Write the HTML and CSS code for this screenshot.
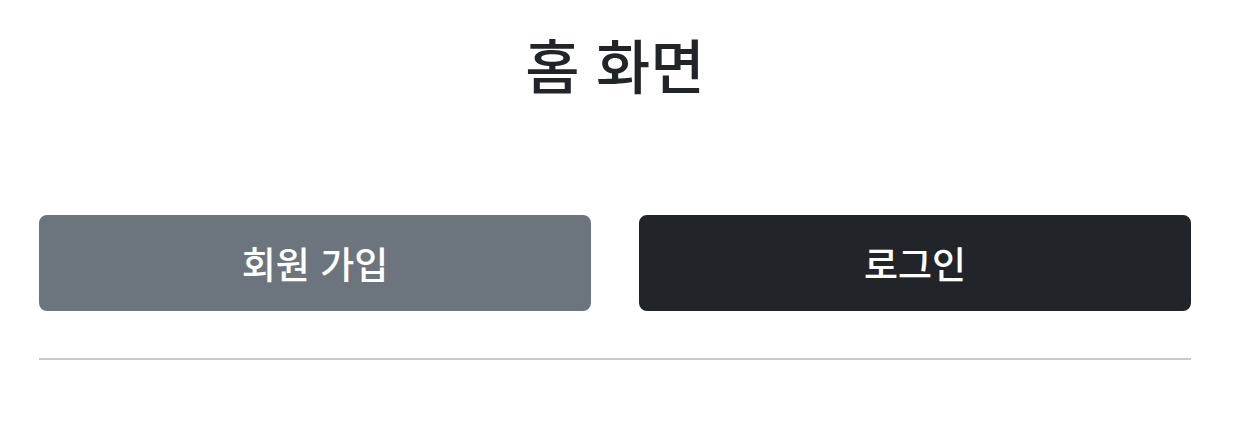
FILE: index.html
```html
<!DOCTYPE html>
<html lang="ko">
<head>
  <meta charset="UTF-8">
  <meta name="viewport" content="width=device-width, initial-scale=1.0">
  <title>홈 화면</title>
  <link rel="stylesheet" href="styles.css">
</head>
<body>
  <div class="container">
    <h1 class="title">홈 화면</h1>
    <div class="actions">
      <button class="btn btn-secondary">회원 가입</button>
      <button class="btn btn-dark">로그인</button>
    </div>
    <hr class="divider">
  </div>
</body>
</html>
```

FILE: styles.css
```css
body {
  margin: 0;
  font-family: "Noto Sans CJK KR", "Noto Sans", sans-serif;
  color: #212529;
  background: #fff;
}
.container {
  padding: 26px 43px 0 39px;
}
.title {
  margin: 0 0 114px;
  font-size: 59px;
  line-height: 75px;
  font-weight: 500;
  text-align: center;
}
.actions {
  display: grid;
  grid-template-columns: 1fr 1fr;
  gap: 48px;
}
.btn {
  font-family: inherit;
  font-size: 37px;
  line-height: 60px;
  font-weight: 500;
  padding: 16px 32px;
  border: 2px solid transparent;
  border-radius: 8px;
  color: #fff;
  cursor: pointer;
}
.btn-secondary {
  background: #6c757d;
  border-color: #6c757d;
}
.btn-dark {
  background: #212529;
  border-color: #212529;
}
.divider {
  margin: 47px 0 0;
  border: 0;
  border-top: 2px solid #c8c9ca;
}
```
